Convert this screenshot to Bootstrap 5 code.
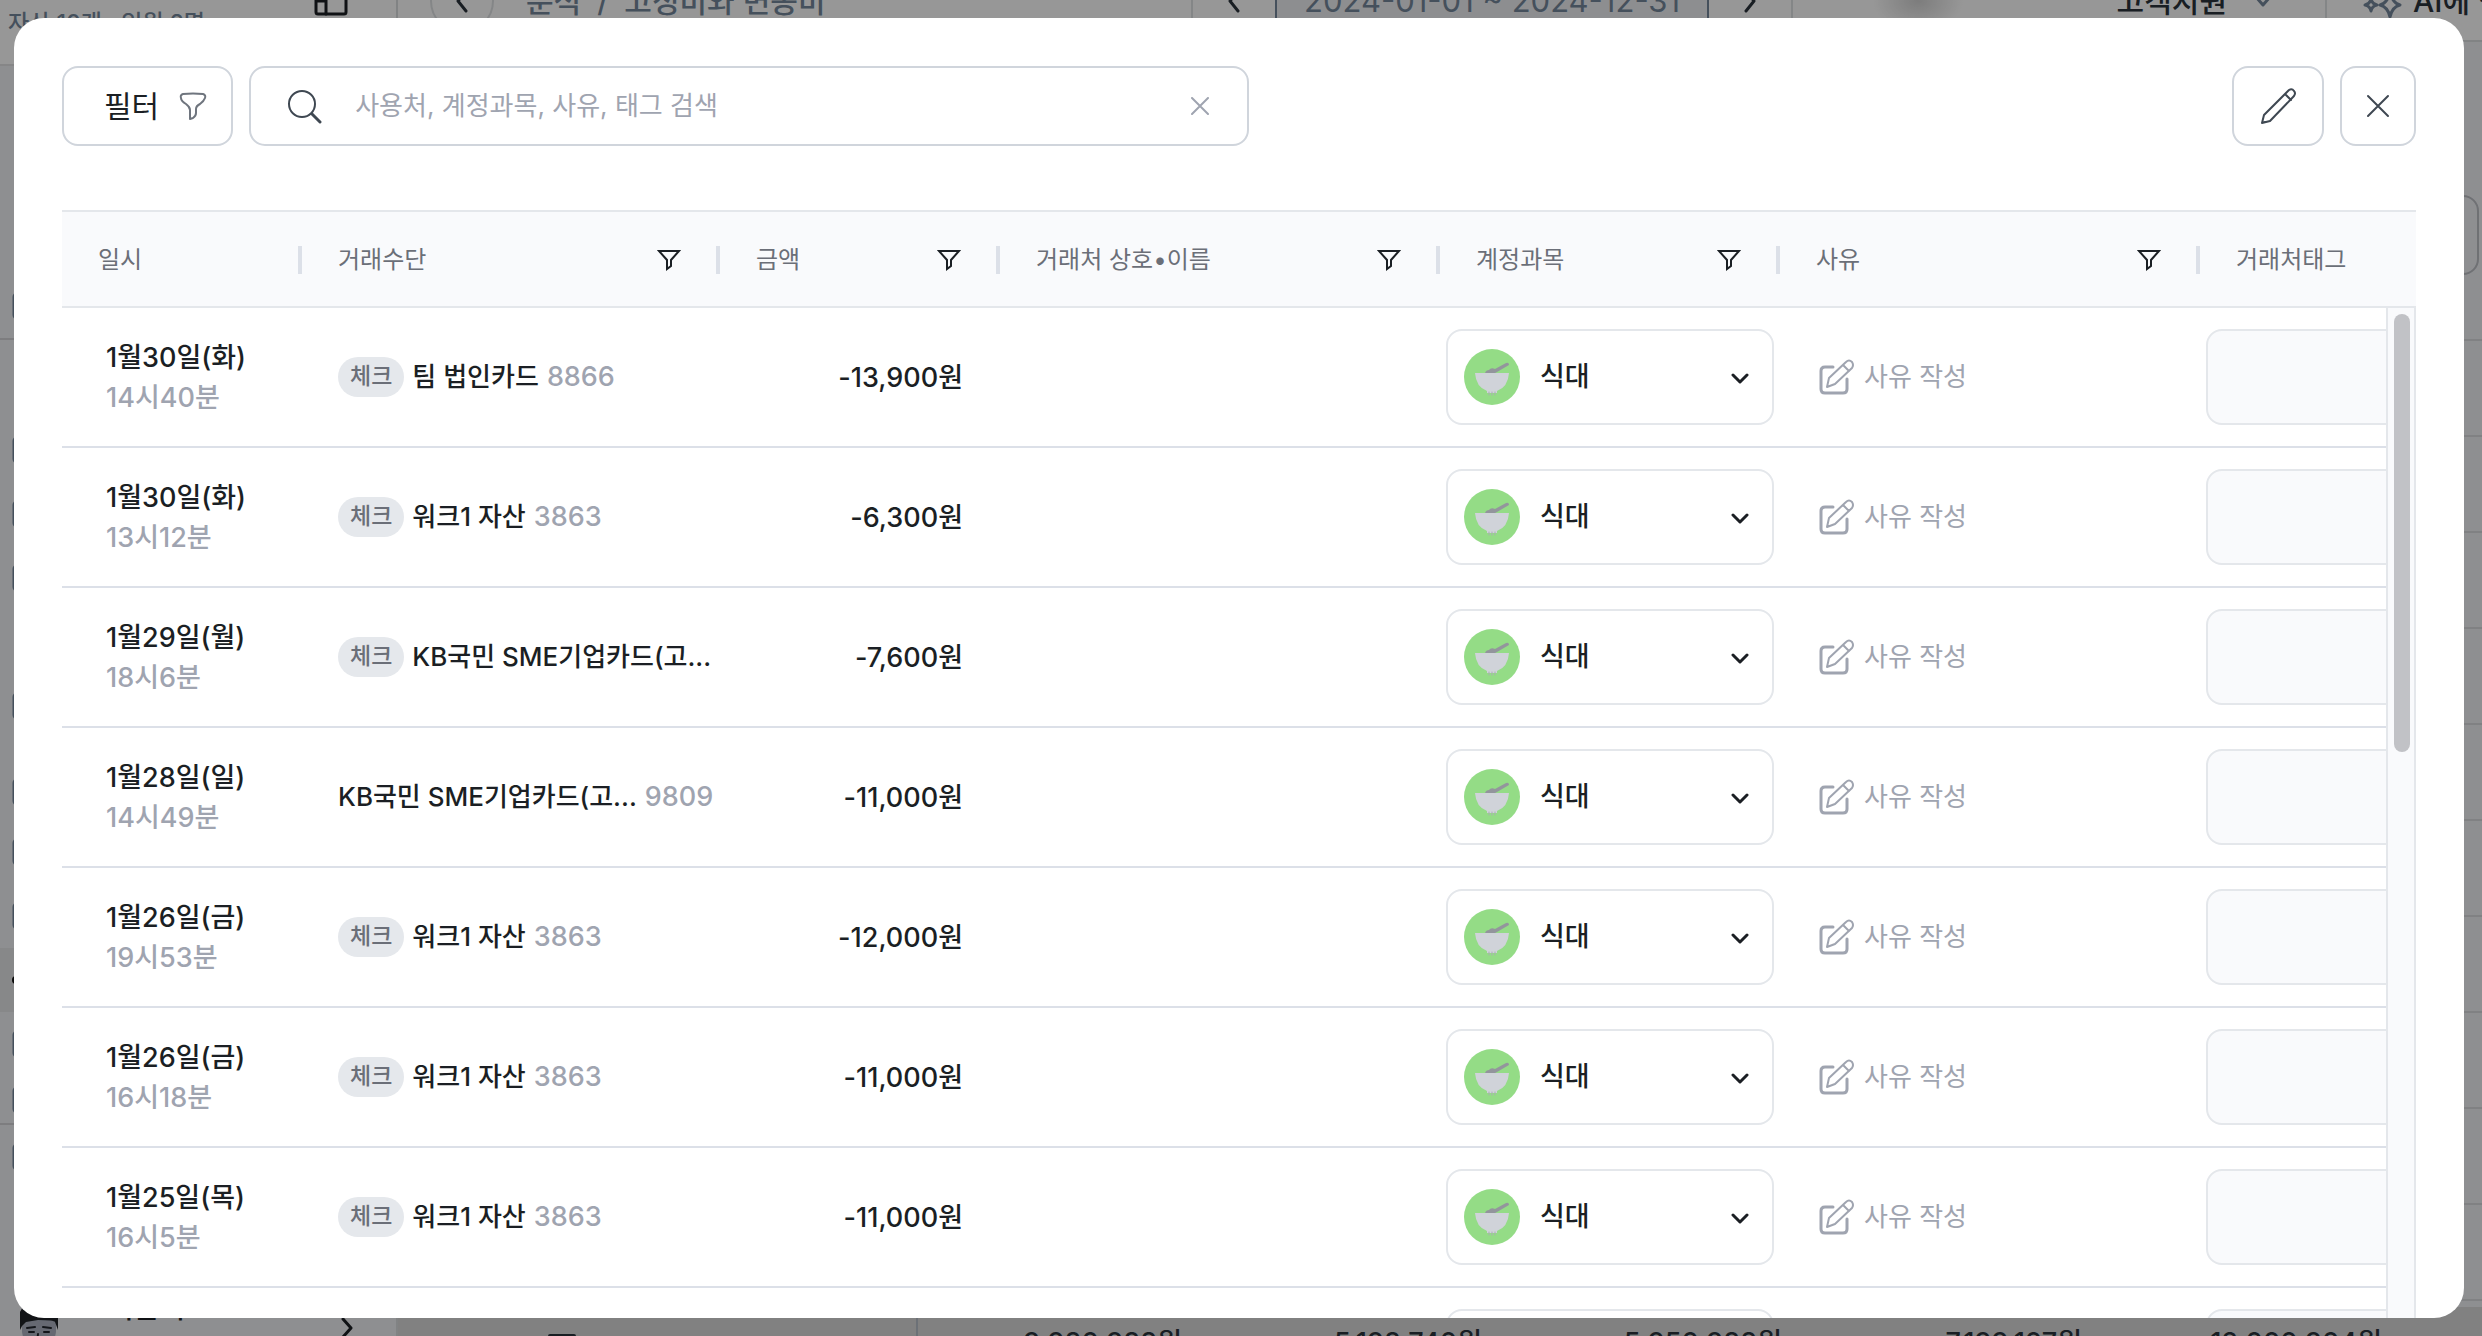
<!DOCTYPE html>
<html lang="ko">
<head>
<meta charset="utf-8">
<meta name="viewport" content="width=device-width, initial-scale=1">
<title>거래내역</title>
<link href="https://cdn.jsdelivr.net/npm/bootstrap@5.3.0/dist/css/bootstrap.min.css" rel="stylesheet">
<style>
  :root { --ink:#1b1f24; --muted:#9fa4b0; --sub:#6b6f78; --line:#e4e7eb; --rule:#dce0e8; --edge:#d0d5dc; --soft:#f9fafc; }
  body { font-family: Inter, "Noto Sans CJK KR", sans-serif; font-size:26px; line-height:40px; color:var(--ink); font-weight:500; overflow:hidden; }
  svg { fill:none; stroke:currentColor; stroke-linecap:round; stroke-linejoin:round; display:block; flex:none; }
  svg.flat { stroke:none; }
  svg.miter { stroke-linejoin:miter; }

  /* page behind the dialog */
  .side { width:398px; background:#edeef2; border-right:2px solid #d8dadd; }
  .side-head { height:106px; margin-top:-40px; background:#fcfcfc; border-bottom:2px solid #dfe0e2; padding:22px 48px 0 8px; }
  .side-head small { font-size:23px; padding-top:21px; color:#738699; }
  .side-group { border-bottom:2px solid #d0d1d4; }
  .group-top { padding-top:208px; }
  .group-main { padding-top:78px; }
  .side-item { height:64px; padding-left:12px; color:#738699; }
  .side-item.current { background:#e2e3e4; color:#111; }
  .side-item.heading { height:82px; padding-top:26px; }
  .side-item.low { height:47px; }
  .side-user { height:72px; margin-bottom:-28px; padding:0 43px 0 18px; font-size:28px; }
  .side-user span { line-height:32px; }
  .topbar { height:82px; margin-top:-40px; padding-top:2px; background:#fcfcfc; border-bottom:2px solid #d8dadd; font-size:30px; color:#2b333b; }
  .topbar span { white-space:nowrap; flex-shrink:0; }
  .topbar-start { width:793px; }
  .crumb { color:#738699; }
  .round-btn { width:64px; height:64px; border:2px solid #dddfe2; border-radius:50%; margin:0 32px; }
  .step { margin:0 35px; }
  .vline { width:2px; align-self:stretch; background:#dddfe2; }
  .range { align-self:stretch; padding:0 27px; border:solid #738699; border-width:0 2px; background:#ecedf1; color:#738699; font-size:31px; font-weight:400; }
  .smudge { width:90px; height:60px; margin-left:80px; background:radial-gradient(closest-side,#d0d0d0,#fcfcfc); }
  .drop { margin:0 53px 0 27px; }
  .spark { margin:0 10px 0 34px; }
  .ask { width:69px; overflow:hidden; }
  .lines { background:#edeef2; padding-top:153px; }
  .lines .outline { height:80px; border:2px solid #b9bcc2; border-radius:16px; margin-right:3px; margin-bottom:64px; }
  .lines .stripe { height:96px; border-top:2px solid #d5d7da; flex:none; }
  .totals { height:72px; margin-bottom:-43px; background:#d7d7d7; font-size:27px; color:#2b333b; }
  .totals .vline { background:#b5bcc6; }
  .totals-start { width:518px; padding-left:150px; }
  .totals .sum { width:300px; text-align:right; flex:none; }
  .totals .sum-first { width:264px; }
  .veil { background:rgba(0,0,0,.4); padding:18px 18px 18px 14px; }

  /* dialog */
  .sheet { background:#fff; border-radius:30px; padding:48px 48px 0; }
  .box-btn { height:80px; border:2px solid var(--edge); border-radius:16px; background:#fff; color:#3f4852; }
  .filter-btn { padding:0 24px 0 40px; gap:20px; font-size:30px; color:#6f757e; }
  .filter-btn span { color:var(--ink); }
  .search-box { width:1000px; padding:0 38px 0 36px; }
  .search-box input { font-size:26px; outline:0; color:var(--ink); font-weight:400; min-width:0; }
  .search-box input::placeholder { color:var(--muted); opacity:1; }
  .grid-area { margin-top:64px; }
  .ledger { table-layout:fixed; width:100%; border-collapse:separate; border-spacing:0; }
  .ledger th { height:98px; padding:2px 0 0 36px; background:var(--soft); border:solid var(--line); border-width:2px 0; font-size:24px; font-weight:400; color:var(--sub); }
  .ledger th button { color:var(--ink); margin:0 35px 0 auto; }
  .ledger td { height:140px; padding:0; border-bottom:2px solid var(--rule); overflow:hidden; white-space:nowrap; }
  .ledger .when { padding:2px 0 0 44px; font-size:27px; }
  .ledger .means { padding-left:36px; }
  .ledger .sum { padding:2px 37px 0 0; text-align:right; font-size:27px; }
  .ledger .pick { padding:0 6px; }
  .ledger .why { padding-left:38px; }
  .ledger .tags { padding-left:6px; }
  .split { width:4px; height:28px; background:var(--rule); flex:none; }
  .kind { height:40px; padding:0 12px; border-radius:20px; background:#e5e8ec; color:var(--sub); font-size:23px; line-height:38px; }
  .dim { color:var(--muted); }
  .light-num { font-size:27px; color:var(--muted); }
  .account { height:96px; border:2px solid var(--line); border-radius:16px; padding:0 23px 0 16px; }
  .account select { appearance:none; font-size:27px; font-weight:500; color:var(--ink); outline:0; padding:0; margin-left:20px; }
  .tag-box { width:328px; height:96px; border:2px solid var(--line); border-radius:16px; background:var(--soft); font-size:26px; display:block; }
  .track { top:98px; bottom:0; right:0; width:30px; background:var(--soft); border:solid var(--line); border-width:0 2px; padding:6px 4px 0 6px; }
  .thumb { width:16px; height:438px; border-radius:8px; background:#c1c2c6; }
</style>
</head>
<body>
<div class="vh-100 position-relative overflow-hidden">

  <div class="d-flex h-100" aria-hidden="true">
    <aside class="side d-flex flex-column flex-shrink-0">
      <div class="side-head d-flex justify-content-between align-items-start flex-shrink-0">
        <small>자산 10개 · 임원 2명</small>
        <svg width="34" height="34" viewBox="0 0 34 34" stroke-width="3"><rect x="2" y="2" width="30" height="30" rx="2"/><path d="M12 2v30M3 11h8M3 19h8"/></svg>
      </div>
      <div class="side-group group-top flex-shrink-0" id="groupTop"></div>
      <div class="side-group group-main flex-shrink-0" id="groupMain"></div>
      <div class="flex-grow-1 overflow-hidden" id="groupEnd"></div>
      <div class="side-user d-flex align-items-center flex-shrink-0">
        <svg class="flat" width="42" height="56" viewBox="0 0 42 56"><path fill="#aab0bf" d="M4 14Q21-6 38 14v18Q34 54 21 55 8 54 4 32z"/><path fill="#1e2227" d="M2 30V12Q8-2 22 0q16 0 18 14v16l-3-8Q36 20 20 20L8 22 4 26z"/><path stroke="#22262d" stroke-width="2" fill="none" d="M9 28l8-1M25 27l8 1M11 32h5M26 32h5M20 34l-1 8h4M16 47h10"/></svg>
        <span class="align-self-start ms-5">이은식</span>
        <svg class="ms-auto" width="12" height="22" viewBox="0 0 12 22" stroke-width="3"><path d="M2 2l8 9-8 9"/></svg>
      </div>
    </aside>

    <div class="d-flex flex-column flex-grow-1">
      <div class="topbar d-flex align-items-center flex-shrink-0">
        <div class="topbar-start d-flex align-items-center flex-shrink-0">
          <span class="round-btn d-flex align-items-center justify-content-center"><svg width="12" height="24" viewBox="0 0 12 24" stroke-width="3"><path d="M10 2L2 12l8 10"/></svg></span>
          <span class="crumb">분석 &nbsp;/&nbsp; 고정비와 변동비</span>
        </div>
        <span class="vline"></span>
        <svg class="step" width="12" height="24" viewBox="0 0 12 24" stroke-width="3"><path d="M10 2L2 12l8 10"/></svg>
        <span class="range d-flex align-items-center">2024-01-01 ~ 2024-12-31</span>
        <svg class="step" width="12" height="24" viewBox="0 0 12 24" stroke-width="3"><path d="M2 2l8 10-8 10"/></svg>
        <span class="vline"></span>
        <span class="smudge me-auto"></span>
        <span>고객지원</span>
        <svg class="drop crumb" width="18" height="20" viewBox="0 0 18 20" stroke-width="3"><path d="M2 6l7 8 7-8"/></svg>
        <span class="vline"></span>
        <svg class="spark crumb" width="42" height="40" viewBox="0 0 42 40" stroke-width="3"><path d="M10 18q1 5 6 6-5 1-6 6-1-5-6-6 5-1 6-6zM29 10q2 12 10 14-8 2-10 12-2-10-10-12 8-2 10-14z"/></svg>
        <span class="ask">AI에 질문</span>
      </div>
      <div class="lines flex-grow-1 overflow-hidden d-flex flex-column" id="lines"><div class="outline flex-shrink-0"></div></div>
      <div class="totals d-flex align-items-center flex-shrink-0">
        <div class="totals-start flex-shrink-0"><svg width="28" height="18" viewBox="0 0 28 18" stroke-width="4"><path d="M2 2h24M2 14h24"/></svg></div>
        <span class="vline"></span>
        <span class="sum sum-first">9,980,988원</span><span class="sum">5,198,740원</span><span class="sum">5,950,988원</span><span class="sum">7,199,107원</span><span class="sum">12,000,904원</span>
      </div>
    </div>
  </div>

  <div class="veil position-absolute top-0 start-0 w-100 h-100">
    <div class="sheet h-100 overflow-hidden d-flex flex-column" role="dialog" aria-label="거래내역">
      <div class="d-flex align-items-center gap-3 flex-shrink-0">
        <button type="button" class="box-btn filter-btn d-flex align-items-center flex-shrink-0">
          <span class="text-nowrap">필터</span>
          <svg width="28" height="28" viewBox="0 0 28 28" stroke-width="2"><path d="M4 2q10-1 20 0 3 1 2 4-1 3-5 6-4 2-4 5v4q0 3-3 5l-3 1v-9q0-3-4-6-5-3-5-6-1-3 2-4z"/></svg>
        </button>
        <div class="box-btn search-box d-flex align-items-center">
          <svg width="36" height="36" viewBox="0 0 36 36" stroke-width="2"><circle cx="15" cy="16" r="13"/><path stroke-width="3" d="M25 26l8 8"/></svg>
          <input type="text" class="border-0 bg-transparent flex-grow-1 ms-4 ps-2" aria-label="검색" placeholder="사용처, 계정과목, 사유, 태그 검색">
          <button type="button" class="border-0 bg-transparent p-0 dim" aria-label="지우기"><svg width="18" height="18" viewBox="0 0 18 18" stroke-width="2"><path d="M1 1l16 16M17 1L1 17"/></svg></button>
        </div>
        <button type="button" class="box-btn d-flex align-items-center justify-content-center ms-auto px-4" aria-label="편집">
          <svg width="40" height="38" viewBox="0 0 40 38" stroke-width="2"><path d="M4 36l2-8L31 3q3-2 5 1 2 2 0 5L12 34zM27 7l6 6M4 36l3-1"/></svg>
        </button>
        <button type="button" class="box-btn d-flex align-items-center justify-content-center px-4" aria-label="닫기">
          <svg width="24" height="24" viewBox="0 0 24 24" stroke-width="2"><path d="M2 2l20 20M22 2L2 22"/></svg>
        </button>
      </div>

      <div class="grid-area position-relative flex-grow-1 overflow-hidden">
        <table class="ledger">
          <colgroup><col style="width:240px"><col style="width:418px"><col style="width:280px"><col style="width:440px"><col style="width:340px"><col style="width:420px"><col></colgroup>
          <thead><tr id="heads"></tr></thead>
          <tbody id="rows"></tbody>
        </table>
        <div class="track position-absolute"><div class="thumb"></div></div>
      </div>
    </div>
  </div>
</div>

<script src="https://cdn.jsdelivr.net/npm/bootstrap@5.3.0/dist/js/bootstrap.bundle.min.js"></script>
<script>
  const funnel = '<svg class="miter" width="24" height="22" viewBox="0 0 24 22" stroke-width="2"><path d="M2 2h20L14 11v6l-4 3v-9z"/></svg>';
  const heads = ['일시', '거래수단', '금액', '거래처 상호•이름', '계정과목', '사유', '거래처태그'];
  document.getElementById('heads').innerHTML = heads.map((h, i) => {
    const btn = i > 0 && i < 6 ? `<button type="button" class="border-0 bg-transparent p-0" aria-label="${h} 필터">${funnel}</button>` : '';
    const end = i < 6 ? `<span class="split ${i ? '' : 'ms-auto'}"></span>` : '';
    return `<th scope="col"><div class="d-flex align-items-center"><span class="text-nowrap">${h}</span>${btn}${end}</div></th>`;
  }).join('');

  const data = [
    ['1월30일(화)', '14시40분', true, '팀 법인카드', '8866', '-13,900원'],
    ['1월30일(화)', '13시12분', true, '워크1 자산', '3863', '-6,300원'],
    ['1월29일(월)', '18시6분', true, 'KB국민 SME기업카드(고...', '', '-7,600원'],
    ['1월28일(일)', '14시49분', false, 'KB국민 SME기업카드(고...', '9809', '-11,000원'],
    ['1월26일(금)', '19시53분', true, '워크1 자산', '3863', '-12,000원'],
    ['1월26일(금)', '16시18분', true, '워크1 자산', '3863', '-11,000원'],
    ['1월25일(목)', '16시5분', true, '워크1 자산', '3863', '-11,000원'],
    ['', '', false, '', '', '']
  ];
  const bowl = '<svg class="flat" width="56" height="56" viewBox="0 0 56 56"><circle cx="28" cy="28" r="28" fill="#94dc86"/><path fill="#93959c" d="M21 24q1-3 4-3 2-3 6-1l11-6q3-1 3 2l-12 7-2 1z"/><path fill="#d0d3d9" d="M11 24h34q-1 14-12 18v2H23v-2Q12 38 11 24z"/><path stroke="#a9adb4" stroke-width="1" d="M25 43v3M28 43v3M31 43v3"/></svg>';
  const chevron = '<svg class="mt-1" width="18" height="12" viewBox="0 0 18 12" stroke-width="3"><path d="M2 2l7 7 7-7"/></svg>';
  const note = '<svg width="38" height="38" viewBox="0 0 38 38" stroke-width="2"><path stroke-width="3" d="M15 9H7q-4 0-4 4v18q0 4 4 4h18q4 0 4-4V21"/><path d="M9 29l2-9L28 4q3-3 6 0 2 3 0 6L17 26zM25 7l6 6"/></svg>';
  document.getElementById('rows').innerHTML = data.map(([day, time, check, card, num, sum], i) => `
    <tr>
      <td class="when"><div>${day}</div><div class="light-num">${time}</div></td>
      <td class="means"><div class="d-flex align-items-center gap-2">${check ? '<span class="kind">체크</span>' : ''}<span>${card}</span><span class="light-num">${num}</span></div></td>
      <td class="sum">${sum}</td>
      <td></td>
      <td class="pick"><div class="account d-flex align-items-center">${bowl}<select class="border-0 bg-transparent flex-grow-1" aria-label="계정과목 ${i + 1}"><option>식대</option></select>${chevron}</div></td>
      <td class="why"><button type="button" class="border-0 bg-transparent p-0 d-flex align-items-center gap-2 dim">${note}<span>사유 작성</span></button></td>
      <td class="tags"><input type="text" class="tag-box" aria-label="거래처태그 ${i + 1}"></td>
    </tr>`).join('');

  const square = '<svg width="24" height="28" viewBox="0 0 24 28" stroke-width="3"><rect x="2" y="2" width="20" height="24" rx="3"/></svg>';
  const dot = '<svg class="flat" width="8" height="8" viewBox="0 0 8 8"><circle cx="4" cy="4" r="4" fill="#111"/></svg>';
  const item = kind => `<div class="side-item d-flex align-items-center ${kind}">${kind === 'blank' ? '' : kind === 'current' ? dot : square}</div>`;
  document.getElementById('groupTop').innerHTML = item('');
  document.getElementById('groupMain').innerHTML = ['', '', '', 'blank', '', 'heading', '', '', 'current', '', 'low'].map(item).join('');
  document.getElementById('groupEnd').innerHTML = item('');
  document.getElementById('lines').insertAdjacentHTML('beforeend', '<div class="stripe"></div>'.repeat(11));
</script>
</body>
</html>
